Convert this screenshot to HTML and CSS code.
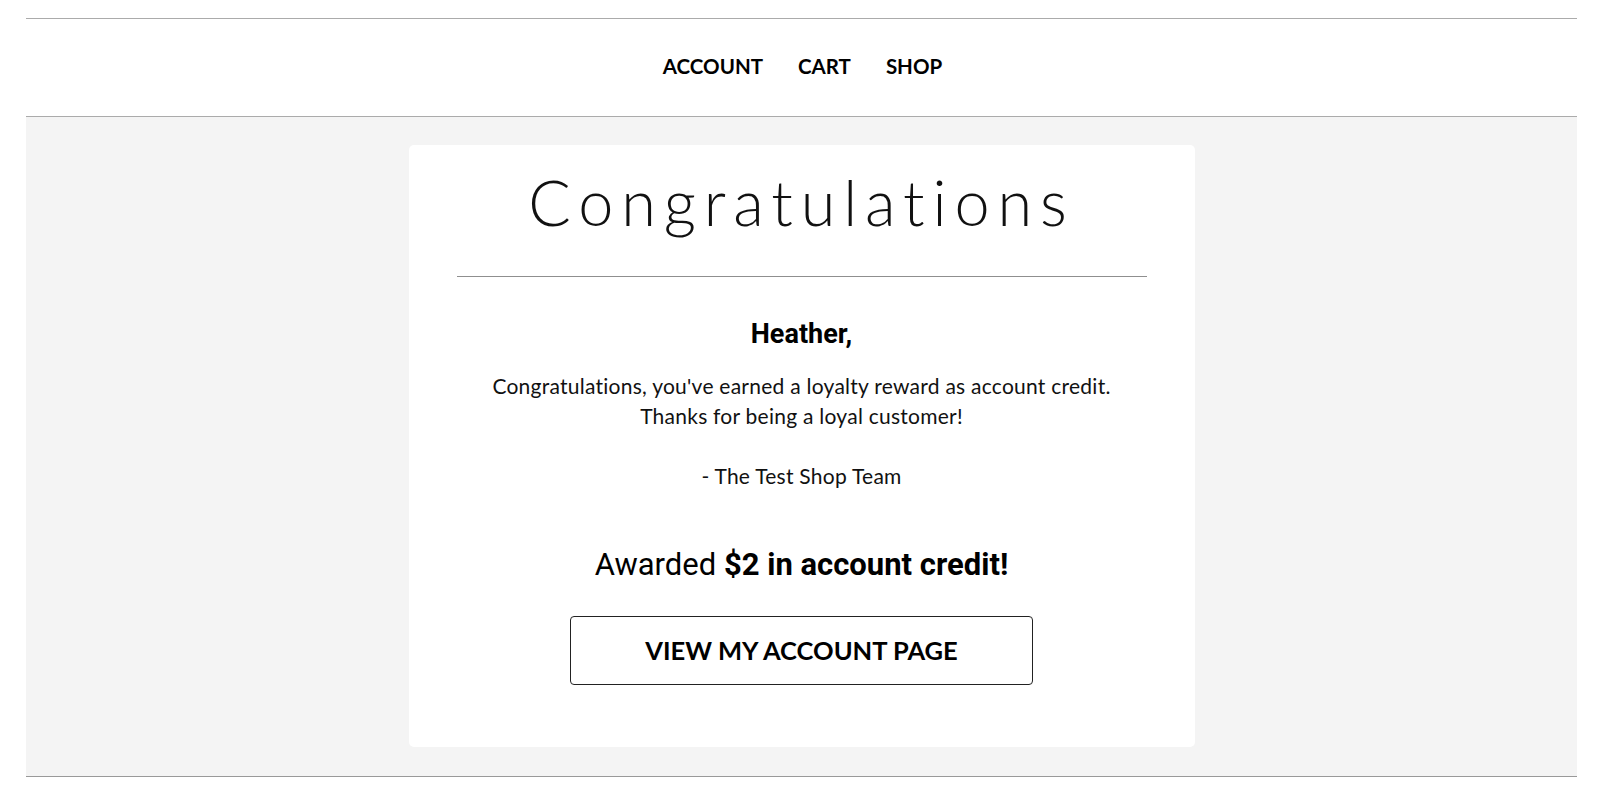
FILE: index.html
```html
<!DOCTYPE html>
<html>
<head>
<meta charset="utf-8">
<link rel="stylesheet" href="styles.css">
</head>
<body>
<div class="page">
  <header class="header">
    <nav class="nav">
      <a class="nav-link" href="#">ACCOUNT</a>
      <a class="nav-link" href="#">CART</a>
      <a class="nav-link" href="#">SHOP</a>
    </nav>
  </header>
  <main class="main">
    <section class="card">
      <h1 class="title">Congratulations</h1>
      <hr class="divider">
      <h2 class="greeting">Heather,</h2>
      <p class="message">Congratulations, you've earned a loyalty reward as account credit.<br>Thanks for being a loyal customer!<br><br>- The Test Shop Team</p>
      <p class="award">Awarded <strong>$2 in account credit!</strong></p>
      <a class="button" href="#">VIEW MY ACCOUNT PAGE</a>
    </section>
  </main>
</div>
</body>
</html>
```

FILE: styles.css
```css
html, body {
  margin: 0;
  padding: 0;
  background: #fff;
}

.page {
  margin: 18px 23px 0 26px;
  font-family: "Lato", "Open Sans", sans-serif;
  color: #111;
}

.header {
  border-top: 1px solid #ababab;
  height: 97px;
  display: flex;
  align-items: center;
  justify-content: center;
}

.nav {
  display: flex;
  gap: 35px;
  padding-left: 2px;
  margin-top: -2px;
}

.nav-link {
  font-family: "Lato", sans-serif;
  font-weight: 700;
  font-size: 20.5px;
  line-height: 1;
  color: #000;
  text-decoration: none;
}

.main {
  border-top: 1px solid #ababab;
  border-bottom: 1px solid #999;
  background: #f4f4f4;
  padding: 28px 0 29px;
  display: flex;
  justify-content: center;
}

.card {
  width: 786px;
  box-sizing: border-box;
  background: #fff;
  border-radius: 5px;
  padding: 25px 48px 62px;
  display: flex;
  flex-direction: column;
  align-items: center;
  text-align: center;
}

.title {
  margin: 0;
  font-family: "Lato", sans-serif;
  font-weight: 300;
  font-size: 63px;
  line-height: 63px;
  letter-spacing: 0.125em;
  color: #111;
}

.divider {
  align-self: stretch;
  margin: 43px 0 0;
  border: 0;
  border-top: 1px solid #8f8f8f;
  height: 0;
}

.greeting {
  margin: 44px 0 0;
  font-family: "Roboto", sans-serif;
  font-weight: 700;
  font-size: 27px;
  line-height: 27px;
  color: #000;
}

.message {
  margin: 23px 0 0;
  font-family: "Lato", sans-serif;
  font-weight: 400;
  font-size: 21px;
  line-height: 30px;
  letter-spacing: 0.25px;
  color: #111;
}

.award {
  margin: 59px 0 0;
  font-family: "Roboto", sans-serif;
  font-weight: 400;
  font-size: 31px;
  line-height: 30px;
  color: #000;
}

.award strong {
  font-weight: 700;
}

.button {
  margin-top: 36px;
  width: 463px;
  height: 69px;
  box-sizing: border-box;
  border: 1px solid #222;
  border-radius: 4px;
  display: flex;
  align-items: center;
  justify-content: center;
  font-family: "Lato", sans-serif;
  font-weight: 700;
  font-size: 25.5px;
  line-height: 1;
  color: #000;
  text-decoration: none;
}
```
